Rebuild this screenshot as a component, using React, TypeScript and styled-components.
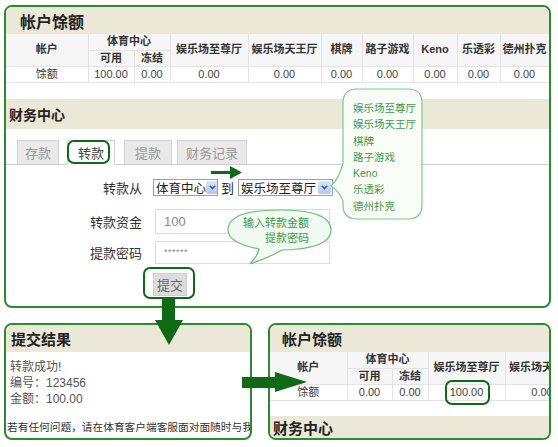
import styled, {createGlobalStyle} from 'styled-components';

const GlobalStyle = createGlobalStyle`
   html, body {
      margin: 0;
      padding: 0;
      background: #ffffff;
   }
   body {
      font-family: 'Liberation Sans', 'Noto Sans CJK SC', sans-serif;
      color: #333;
   }
`;

const GREEN = '#2a8c2a';
const DARK = '#0f6a14';
const BEIGE = '#ebe8d7';

const mainCols = [82, 46, 36, 78, 73, 41, 51, 44, 43, 49];
const mainGames = ['娱乐场至尊厅', '娱乐场天王厅', '棋牌', '路子游戏', 'Keno', '乐透彩', '德州扑克'];
const mainValues = ['100.00', '0.00', '0.00', '0.00', '0.00', '0.00', '0.00', '0.00', '0.00'];

const smallCols = [77, 45, 36, 77, 74];
const smallGames = ['娱乐场至尊厅', '娱乐场天王厅'];
const smallValues = ['0.00', '0.00', '100.00', '0.00'];

const gameList = ['娱乐场至尊厅', '娱乐场天王厅', '棋牌', '路子游戏', 'Keno', '乐透彩', '德州扑克'];

function BalanceTable({cols, games, values, width}) {
   return (
      <TableSC style={{width}}>
         <colgroup>
            {cols.map((w, i) => (
               <col key={i} style={{width: w}} />
            ))}
         </colgroup>
         <thead>
            <tr>
               <Th rowSpan={2}>帐户</Th>
               <Th colSpan={2}>体育中心</Th>
               {games.map((g) => (
                  <Th key={g} rowSpan={2}>
                     {g}
                  </Th>
               ))}
            </tr>
            <tr>
               <Th>可用</Th>
               <Th>冻结</Th>
            </tr>
         </thead>
         <tbody>
            <tr>
               <Td>馀额</Td>
               {values.map((v, i) => (
                  <Td key={i}>{v}</Td>
               ))}
            </tr>
         </tbody>
      </TableSC>
   );
}

function Chevron() {
   return (
      <svg width='7' height='5' viewBox='0 0 7 5'>
         <path d='M0.8 0.8 L3.5 3.6 L6.2 0.8' fill='none' stroke='#3d5a96' strokeWidth='1.6' />
      </svg>
   );
}

export default function App() {
   return (
      <Page>
         <GlobalStyle />
         {/* top: balance + finance center */}
         <Panel $width={547} $height={303}>
            <PanelTitle $height={27} $size={16} $pad={14}>
               帐户馀额
            </PanelTitle>
            <BalanceTable cols={mainCols} games={mainGames} values={mainValues} width={543} />
            <SectionBar $height={30} $gap={16}>
               财务中心
            </SectionBar>

            <Tabs>
               <Tab $w={42} $ml={11}>存款</Tab>
               <Tab $w={48} $ml={8} $active>
                  转款
               </Tab>
               <Tab $w={48} $ml={9}>提款</Tab>
               <Tab $w={70} $ml={5}>财务记录</Tab>
            </Tabs>

            <Form>
               <FormRow $h={17} $mt={14}>
                  <Label>转款从</Label>
                  <FakeSelect $w={65}>
                     <span>体育中心</span>
                     <SelectArrow>
                        <Chevron />
                     </SelectArrow>
                  </FakeSelect>
                  <Joiner>到</Joiner>
                  <FakeSelect $w={95}>
                     <span>娱乐场至尊厅</span>
                     <SelectArrow>
                        <Chevron />
                     </SelectArrow>
                  </FakeSelect>
               </FormRow>
               <FormRow $h={25} $mt={13}>
                  <Label>转款资金</Label>
                  <TextInput $h={25}>100</TextInput>
               </FormRow>
               <FormRow $h={23} $mt={7}>
                  <Label>提款密码</Label>
                  <TextInput $h={23} $small>
                     ******
                  </TextInput>
               </FormRow>
               <FormRow $h={23} $mt={9}>
                  <Label />
                  <SubmitButton>提交</SubmitButton>
               </FormRow>
            </Form>
         </Panel>

         <BottomRow>
            <Panel $width={248} $height={117}>
               <PanelTitle $height={27} $size={15} $pad={5}>
                  提交结果
               </PanelTitle>
               <ResultBody>
                  <ResultLine>转款成功!</ResultLine>
                  <ResultLine>编号：123456</ResultLine>
                  <ResultLine>金额：100.00</ResultLine>
                  <ResultNote>若有任何问题，请在体育客户端客服面对面随时与我</ResultNote>
               </ResultBody>
            </Panel>

            <Panel $width={283} $height={117}>
               <PanelTitle $height={27} $size={15} $pad={12}>
                  帐户馀额
               </PanelTitle>
               <BalanceTable cols={smallCols} games={smallGames} values={smallValues} width={309} />
               <SectionBar $height={23} $gap={15} $size={15}>
                  财务中心
               </SectionBar>
            </Panel>
         </BottomRow>

         {/* annotations */}
         <Highlight $x={67} $y={140} $w={43} $h={24} />
         <Highlight $x={143} $y={267} $w={52} $h={32} />
         <Highlight $x={445} $y={380} $w={45} $h={25} />

         <Overlay $x={211} $y={166}>
            <svg width='32' height='13' viewBox='0 0 32 13'>
               <rect x='0' y='5' width='20' height='3' fill={DARK} />
               <polygon points='19,0 31,6.5 19,13' fill={DARK} />
            </svg>
         </Overlay>

         <Overlay $x={153} $y={297}>
            <svg width='32' height='50' viewBox='0 0 32 50'>
               <polygon points='9,0 22,0 22,23 30,23 16,48 2,23 9,23' fill={DARK} />
            </svg>
         </Overlay>

         <Overlay $x={240} $y={370}>
            <svg width='70' height='24' viewBox='0 0 70 24'>
               <polygon points='2,7 35,7 35,2 67,12 35,22 35,18 2,18' fill={DARK} />
            </svg>
         </Overlay>

         {/* game list callout */}
         <Overlay $x={329} $y={87}>
            <svg width='96' height='136' viewBox='0 0 96 136'>
               <path
                  d='M28 2 H79 Q93 2 93 16 V118 Q93 132 79 132 H28 Q14 132 14 118 V114 Q10 104 2 99 Q10 92 14 76 V16 Q14 2 28 2 Z'
                  fill='#f8fdf8'
                  stroke='#7acb86'
                  strokeWidth='1.2'
               />
            </svg>
            <GameList>
               {gameList.map((g) => (
                  <li key={g}>{g}</li>
               ))}
            </GameList>
         </Overlay>

         {/* amount / password callout */}
         <Overlay $x={226} $y={207}>
            <svg width='108' height='60' viewBox='0 0 108 60'>
               <path
                  d='M33 42 Q 2 36 2 23 Q 2 3 54 3 Q 105 3 105 23 Q 105 42 56 43 Q 44 50 24 57 Q 31 50 33 42 Z'
                  fill='#f2fbf2'
                  stroke='#6cc07a'
                  strokeWidth='1.2'
               />
            </svg>
            <BubbleText>
               <span>输入转款金额</span>
               <span>提款密码</span>
            </BubbleText>
         </Overlay>
      </Page>
   );
}

const Page = styled('div')`
   position: relative;
   width: 558px;
   height: 447px;
   overflow: hidden;
   padding: 5px 0 0 4px;
   box-sizing: border-box;
`;

const Panel = styled('div')`
   width: ${(p) => p.$width}px;
   height: ${(p) => p.$height}px;
   box-sizing: border-box;
   border: 2px solid ${GREEN};
   border-radius: 8px;
   overflow: hidden;
   background: #fff;
`;

const PanelTitle = styled('div')`
   height: ${(p) => p.$height}px;
   display: flex;
   align-items: center;
   padding-left: ${(p) => p.$pad}px;
   background: ${BEIGE};
   font-size: ${(p) => p.$size}px;
   font-weight: bold;
   color: #222;
`;

const TableSC = styled('table')`
   table-layout: fixed;
   border-collapse: collapse;
   font-size: 11px;

   tr {
      height: 16px;
   }
`;

const Th = styled('th')`
   padding: 0;
   border: 1px solid #e3e3e3;
   border-top: none;
   background: #f6f6f6;
   font-weight: bold;
   color: #333;
   white-space: nowrap;
   overflow: hidden;
   line-height: 15px;
   &:first-child {
      border-left: none;
   }
`;

const Td = styled('td')`
   padding: 0;
   border: 1px solid #e3e3e3;
   text-align: center;
   color: #444;
   line-height: 15px;
   &:first-child {
      border-left: none;
   }
`;

const SectionBar = styled('div')`
   height: ${(p) => p.$height}px;
   margin-top: ${(p) => p.$gap}px;
   display: flex;
   align-items: center;
   padding-left: 3px;
   background: ${BEIGE};
   font-size: ${(p) => p.$size || 14}px;
   font-weight: bold;
   color: #222;
`;

const Tabs = styled('div')`
   display: flex;
   align-items: flex-end;
   margin-top: 10px;
   height: 25px;
   border-bottom: 1px solid #cfcfcf;
`;

const Tab = styled('div')`
   width: ${(p) => p.$w}px;
   height: 25px;
   margin-left: ${(p) => p.$ml}px;
   margin-bottom: -1px;
   box-sizing: border-box;
   display: flex;
   align-items: center;
   justify-content: center;
   border: 1px solid #d2d2d2;
   border-bottom: ${(p) => (p.$active ? '1px solid #fff' : '1px solid #cfcfcf')};
   background: ${(p) => (p.$active ? '#fff' : '#e9e9e9')};
   color: ${(p) => (p.$active ? '#444' : '#999')};
   font-size: 13px;
`;

const Form = styled('div')`
   display: flex;
   flex-direction: column;
`;

const FormRow = styled('div')`
   display: flex;
   align-items: center;
   height: ${(p) => p.$h}px;
   margin-top: ${(p) => p.$mt}px;
`;

const Label = styled('div')`
   width: 136px;
   flex: none;
   margin-right: 11px;
   text-align: right;
   font-size: 13px;
   color: #333;
`;

const FakeSelect = styled('div')`
   width: ${(p) => p.$w}px;
   height: 17px;
   box-sizing: border-box;
   display: flex;
   align-items: center;
   justify-content: space-between;
   border: 1px solid #8aa3c4;
   background: #fff;
   font-size: 12.5px;
   color: #222;
   padding-left: 2px;
   white-space: nowrap;
   overflow: hidden;
`;

const SelectArrow = styled('div')`
   width: 13px;
   height: 13px;
   margin-right: 1px;
   flex: none;
   display: flex;
   align-items: center;
   justify-content: center;
   background: linear-gradient(#d8e4fc, #b3c8f4);
   border-radius: 2px;
`;

const Joiner = styled('span')`
   margin: 0 4px 0 3px;
   font-size: 13px;
   color: #222;
`;

const TextInput = styled('div')`
   width: 175px;
   height: ${(p) => p.$h}px;
   margin-left: 2px;
   box-sizing: border-box;
   display: flex;
   align-items: center;
   padding-left: 8px;
   border: 1px solid #dcdcdc;
   font-size: ${(p) => (p.$small ? 9 : 13)}px;
   color: #888;
   letter-spacing: ${(p) => (p.$small ? '0.5px' : '0')};
`;

const SubmitButton = styled('div')`
   width: 34px;
   height: 23px;
   box-sizing: border-box;
   display: flex;
   align-items: center;
   justify-content: center;
   background: #dcdcdc;
   border: 1px solid #cfcfcf;
   font-size: 13px;
   color: #666;
`;

const BottomRow = styled('div')`
   display: flex;
   gap: 16px;
   margin-top: 15px;
`;

const ResultBody = styled('div')`
   display: flex;
   flex-direction: column;
   padding: 7px 0 0 4px;
`;

const ResultLine = styled('div')`
   font-size: 12px;
   line-height: 16px;
   color: #555;
`;

const ResultNote = styled('div')`
   margin-top: 13px;
   margin-left: -3px;
   font-size: 10.7px;
   line-height: 14px;
   color: #333;
   white-space: nowrap;
   overflow: hidden;
`;

const Highlight = styled('div')`
   position: absolute;
   left: ${(p) => p.$x}px;
   top: ${(p) => p.$y}px;
   width: ${(p) => p.$w}px;
   height: ${(p) => p.$h}px;
   box-sizing: border-box;
   border: 2px solid ${DARK};
   border-radius: 7px;
`;

const Overlay = styled('div')`
   position: absolute;
   left: ${(p) => p.$x}px;
   top: ${(p) => p.$y}px;

   svg {
      display: block;
   }
`;

const GameList = styled('ul')`
   position: absolute;
   left: 24px;
   top: 13px;
   margin: 0;
   padding: 0;
   list-style: none;
   font-size: 10.5px;
   line-height: 16.3px;
   color: #3d9b45;
   white-space: nowrap;
`;

const BubbleText = styled('div')`
   position: absolute;
   right: 25px;
   top: 9px;
   display: flex;
   flex-direction: column;
   align-items: flex-end;
   font-size: 11px;
   line-height: 15px;
   color: #3d9b45;
   white-space: nowrap;
`;
